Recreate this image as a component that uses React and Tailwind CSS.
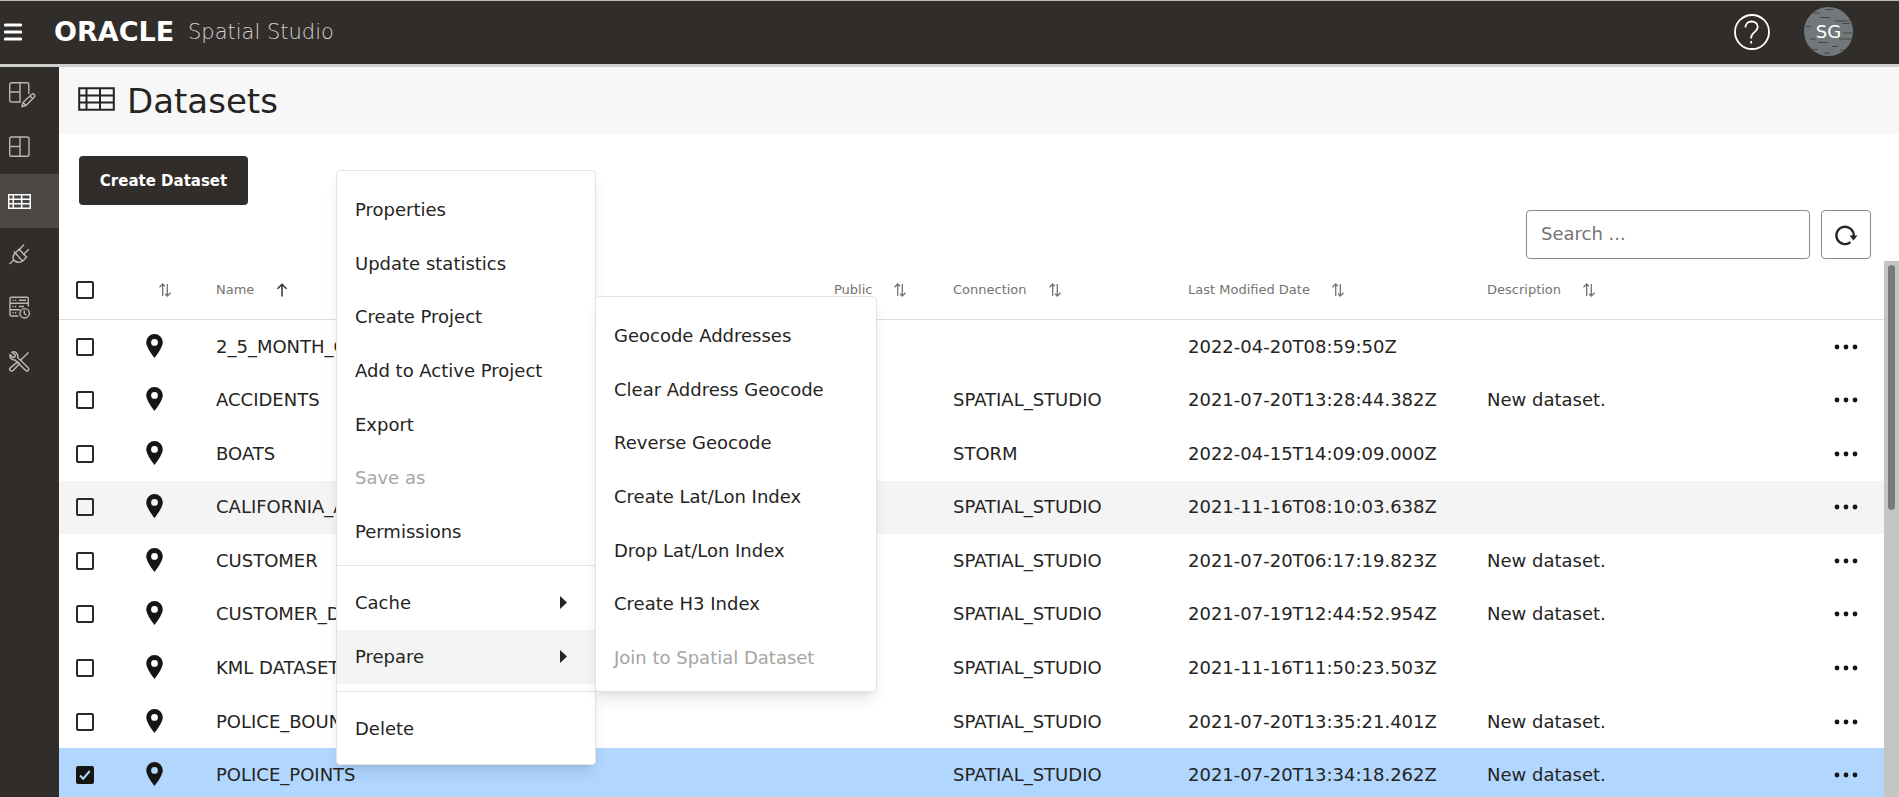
import { useState } from "react";
import clsx from "clsx";

const datasets = [
  { name: "2_5_MONTH_CRIMES", connection: "", modified: "2022-04-20T08:59:50Z", description: "" },
  { name: "ACCIDENTS", connection: "SPATIAL_STUDIO", modified: "2021-07-20T13:28:44.382Z", description: "New dataset." },
  { name: "BOATS", connection: "STORM", modified: "2022-04-15T14:09:09.000Z", description: "" },
  { name: "CALIFORNIA_AREAS", connection: "SPATIAL_STUDIO", modified: "2021-11-16T08:10:03.638Z", description: "", active: true },
  { name: "CUSTOMER", connection: "SPATIAL_STUDIO", modified: "2021-07-20T06:17:19.823Z", description: "New dataset." },
  { name: "CUSTOMER_DATA", connection: "SPATIAL_STUDIO", modified: "2021-07-19T12:44:52.954Z", description: "New dataset." },
  { name: "KML DATASET", connection: "SPATIAL_STUDIO", modified: "2021-11-16T11:50:23.503Z", description: "" },
  { name: "POLICE_BOUNDS", connection: "SPATIAL_STUDIO", modified: "2021-07-20T13:35:21.401Z", description: "New dataset." },
  { name: "POLICE_POINTS", connection: "SPATIAL_STUDIO", modified: "2021-07-20T13:34:18.262Z", description: "New dataset." },
];

const mainActions = [
  { label: "Properties" },
  { label: "Update statistics" },
  { label: "Create Project" },
  { label: "Add to Active Project" },
  { label: "Export" },
  { label: "Save as", disabled: true },
  { label: "Permissions" },
];

const prepareActions = [
  { label: "Geocode Addresses" },
  { label: "Clear Address Geocode" },
  { label: "Reverse Geocode" },
  { label: "Create Lat/Lon Index" },
  { label: "Drop Lat/Lon Index" },
  { label: "Create H3 Index" },
  { label: "Join to Spatial Dataset", disabled: true },
];

function GridIcon({ className, strokeWidth = 2 }) {
  return (
    <svg className={className} viewBox="0 0 37 24" fill="none" stroke="currentColor" strokeWidth={strokeWidth}>
      <path d="M1.200 1.200h34.600v21.600H1.200zM1 8.500h35M1 15.500h35M8.500 1v22M22 1v22" />
    </svg>
  );
}

function ProjectEditIcon() {
  return (
    <svg className="w-7 h-7" viewBox="0 0 28 28" fill="none" stroke="currentColor" strokeWidth="1.4">
      <path d="M13 22H3.500A1.800 1.800 0 0 1 1.700 20.200V4.500A1.800 1.800 0 0 1 3.500 2.700H19A1.800 1.800 0 0 1 20.800 4.500V14M12 3v18M2 12h10" />
      <path d="M14 26.500l1-4 8.500-8a1.900 1.900 0 0 1 2.700 2.700l-8.300 8.300zM15 22.500l3 3M22 16l2.500 2.500" />
    </svg>
  );
}

function ProjectIcon() {
  return (
    <svg className="w-7 h-7" viewBox="0 0 28 28" fill="none" stroke="currentColor" strokeWidth="1.4">
      <rect x="1.700" y="4" width="19.300" height="19.300" rx="1.800" />
      <path d="M12 4v19M2 13.500h10" />
    </svg>
  );
}

function PlugIcon() {
  return (
    <svg className="w-7 h-7" viewBox="0 0 28 28" fill="none" stroke="currentColor" strokeWidth="1.500">
      <path d="M1.500 23l4.500-4.200M6 10.500l8.500 9.500M7.500 11.800l3.500-3.500 7.500 7.800-3.200 3.300c-2.500 2.500-6.500 2.500-8.800.2s-1.800-5.200 1-7.800zM11.500 8.500l4.500-5M16 13l4.800-4.800" />
    </svg>
  );
}

function JobsIcon() {
  return (
    <svg className="w-7 h-7" viewBox="0 0 28 28" fill="none" stroke="currentColor" strokeWidth="1.400">
      <path d="M10.500 22H3.300a1.300 1.300 0 0 1-1.300-1.300V4.500a1.300 1.300 0 0 1 1.300-1.300H19a1.300 1.300 0 0 1 1.300 1.300v5.500M2 9.300h18.300v3.200M2 15.700h10" />
      <path d="M4.500 6.300h1.200M7 6.300h1.200M11 6.300h7M4.500 12.500h1.200M7 12.500h1.200M11 12.500h5M4.500 18.800h1.200M7 18.800h1.200" />
      <circle cx="16.700" cy="19.300" r="4.700" />
      <path d="M16.300 16.500v3l2.200 1.800" />
    </svg>
  );
}

function ToolsIcon() {
  return (
    <svg className="w-7 h-7" viewBox="0 0 28 28" fill="none" stroke="currentColor" strokeWidth="1.500" strokeLinejoin="round">
      <path d="M4 4.200l3.300 2.800-.5 2-2 .4L2 6.500c-.7 3 1.500 5.800 5 5.500l10.500 10.300a1.800 1.800 0 0 0 2.700-2.600L9.700 9.500C10.400 6 7.500 2.800 4 4.200z" />
      <path d="M20.500 4.500l-8 7.800M9.500 13.800l2 2-6.500 6.700a1.900 1.900 0 0 1-2.700-2.700z" />
    </svg>
  );
}

function PinIcon() {
  return (
    <svg className="w-[17px] h-6" viewBox="0 0 17 24">
      <path fillRule="evenodd" fill="currentColor" d="M8.500 0A8.300 8.300 0 0 0 .2 8.300C.2 14 8.500 24 8.500 24s8.300-10 8.300-15.700A8.300 8.300 0 0 0 8.500 0zm0 5a3.400 3.400 0 1 1 0 6.800 3.400 3.400 0 0 1 0-6.800z" />
    </svg>
  );
}

function SortIcon() {
  return (
    <svg className="w-4 h-4 shrink-0" viewBox="0 0 16 16" fill="none" stroke="currentColor" strokeWidth="1.300">
      <path d="M5.700 14V2M2.500 5.200L5.700 2l2.200 2.300M10.300 2v12M8 11.700l2.300 2.300 3.200-3.200" />
    </svg>
  );
}

function AscendingIcon() {
  return (
    <svg className="w-4 h-4 shrink-0 text-[#333]" viewBox="0 0 16 16" fill="none" stroke="currentColor" strokeWidth="1.500">
      <path d="M8 14.500V2.500M3.500 6.800L8 2.300l4.500 4.500" />
    </svg>
  );
}

function Checkbox({ label, ...props }) {
  return (
    <label className="grid w-[18px] h-[18px]" aria-label={label}>
      <input
        type="checkbox"
        aria-label={label}
        className="[grid-area:1/1] appearance-none w-[18px] h-[18px] border-2 border-[#2b2926] rounded-xs checked:bg-[#161513] checked:border-[#161513]"
        {...props}
      />
      <svg className="[grid-area:1/1] w-[18px] h-[18px] pointer-events-none" viewBox="0 0 18 18" fill="none" stroke="#b1d7ff" strokeWidth="2">
        {props.checked && <path d="M4 9.500l3.200 3.200L13.800 5" />}
      </svg>
    </label>
  );
}

function HeaderCell({ children, sorted }) {
  return (
    <th className="px-4 font-normal text-left" aria-sort={sorted ? "ascending" : undefined}>
      <button className="flex items-center gap-5">
        {children}
        {sorted ? <AscendingIcon /> : <SortIcon />}
      </button>
    </th>
  );
}

function MenuItem({ label, disabled, submenu, active }) {
  return (
    <li className="grid">
      <button
        disabled={disabled}
        className={clsx(
          "flex items-center justify-between pl-[18px] pr-7 text-left",
          disabled && "text-[#a6a5a4]",
          active && "bg-[#f4f4f4]"
        )}
      >
        {label}
        {submenu && (
          <svg className="w-[7px] h-[14px]" viewBox="0 0 7 14" fill="currentColor">
            <path d="M0 0l7 6.500-7 6.500z" />
          </svg>
        )}
      </button>
    </li>
  );
}

const navItems = [
  { label: "Active project", icon: <ProjectEditIcon /> },
  { label: "Projects", icon: <ProjectIcon /> },
  { label: "Datasets", icon: <GridIcon className="w-[23px] h-[15px]" strokeWidth={2.4} />, current: true },
  { label: "Connections", icon: <PlugIcon /> },
  { label: "Jobs", icon: <JobsIcon /> },
  { label: "Administration", icon: <ToolsIcon /> },
];

export default function App() {
  const [selected, setSelected] = useState(["POLICE_POINTS"]);

  const toggle = (name) =>
    setSelected((prev) => (prev.includes(name) ? prev.filter((n) => n !== name) : [...prev, name]));

  return (
    <div className="relative flex flex-col h-screen overflow-hidden bg-white text-lg text-[#252422] font-['DejaVu_Sans',sans-serif]">
      {/* Top bar */}
      <header className="flex items-center shrink-0 h-[67px] pl-1 pr-[46px] pb-[2px] border-t border-t-[#b5bab5] border-b-3 border-b-[#cdd0cd] bg-[#312d2a] text-white">
        <button aria-label="Toggle navigation" className="mr-8">
          <svg className="w-[18px] h-[18px]" viewBox="0 0 18 18" stroke="currentColor" strokeWidth="3.200" strokeLinecap="round">
            <path d="M1.500 2h15M1.500 9h15M1.500 16h15" />
          </svg>
        </button>
        <div className="flex items-center">
          <span className="w-[134px] text-[27px] leading-8 font-bold">ORACLE</span>
          <span className="text-[21px] leading-8 font-extralight text-[#d5d3d1]">Spatial Studio</span>
        </div>
        <button aria-label="Help" className="ml-auto mr-[34px]">
          <svg className="w-9 h-9" viewBox="0 0 36 36" fill="none" stroke="currentColor" strokeWidth="1.800">
            <circle cx="18" cy="18" r="17" />
            <path d="M11.500 13.500c0-3.800 2.500-6 6-6s6.200 2.200 6.200 5.500c0 5.200-6.500 5-6.500 10.500v1M17.200 27v2.500" />
          </svg>
        </button>
        <button aria-label="Account" className="grid place-items-center w-[49px] h-[49px] rounded-full overflow-hidden bg-[#71777a]">
          <svg className="[grid-area:1/1] w-full h-full" viewBox="0 0 49 49" stroke="#45484a" strokeWidth="1">
            <path d="M21 2.500h8M10 6h6M16 10.500h10M31 14h14M38 16.500h8M2 19.500h5M39 26h9M6 32h6M35 32h13M14 35.500h10M28 39.500h6M8 42.500h6M20 46h6M36 43h6" />
          </svg>
          <span className="[grid-area:1/1]">SG</span>
        </button>
      </header>

      <div className="flex flex-1 min-h-0">
        {/* Sidebar */}
        <nav className="w-[59px] shrink-0 bg-[#312d2a] text-[#bab6b1]">
          <ul className="grid auto-rows-fr h-[322px]">
            {navItems.map((item) => (
              <li key={item.label} className="grid">
                <a
                  href="#"
                  aria-label={item.label}
                  className={clsx("flex items-center pl-2", item.current && "bg-[#4c4845] text-white")}
                >
                  {item.icon}
                </a>
              </li>
            ))}
          </ul>
        </nav>

        <main className="flex flex-col flex-1 min-w-0">
          <div className="flex items-center gap-3 h-[67px] pl-[19px] shrink-0 bg-[#f7f7f7]">
            <GridIcon className="w-[37px] h-6 mb-1" />
            <h1 className="text-[34px] leading-10">Datasets</h1>
          </div>

          <div className="px-5 pt-[22px]">
            <button className="w-[169px] h-[49px] pt-[2px] rounded bg-[#312d2a] text-white text-[15px] font-bold">
              Create Dataset
            </button>
          </div>

          <div className="flex justify-end gap-[11px] pr-7 pt-[5px] pb-[2px] shrink-0">
            <input
              type="text"
              aria-label="Search"
              placeholder="Search ..."
              className="w-[284px] h-[49px] px-[14px] pb-[2px] border border-[#8b8a88] rounded placeholder:text-[#757371]"
            />
            <button aria-label="Refresh" className="grid place-items-center w-[50px] h-[49px] border border-[#8b8a88] rounded">
              <svg className="w-6 h-6" viewBox="0 0 24 24" fill="none" stroke="currentColor" strokeWidth="2.300">
                <path d="M16.500 19.200A8.700 8.700 0 1 1 19.700 13" />
                <path d="M15.500 12.500h8l-4 5z" fill="currentColor" stroke="none" />
              </svg>
            </button>
          </div>

          <div className="flex flex-1 min-h-0 overflow-hidden">
            <div className="flex-1 min-w-0">
              <table className="table-fixed w-full h-[541px] border-collapse">
                <colgroup>
                  <col className="w-[76px]" />
                  <col className="w-[65px]" />
                  <col />
                  <col className="w-[119px]" />
                  <col className="w-[235px]" />
                  <col className="w-[299px]" />
                  <col className="w-[337px]" />
                  <col className="w-[76px]" />
                </colgroup>
                <thead>
                  <tr className="h-[58px] border-b border-[#dfdedd] text-[13px] text-[#757371]">
                    <th className="pl-[17px]">
                      <Checkbox label="Select all" checked={false} readOnly />
                    </th>
                    <th className="pl-[22px]">
                      <button className="flex" aria-label="Sort by type">
                        <SortIcon />
                      </button>
                    </th>
                    <HeaderCell sorted>Name</HeaderCell>
                    <HeaderCell>Public</HeaderCell>
                    <HeaderCell>Connection</HeaderCell>
                    <HeaderCell>Last Modified Date</HeaderCell>
                    <HeaderCell>Description</HeaderCell>
                    <th></th>
                  </tr>
                </thead>
                <tbody>
                  {datasets.map((row) => (
                    <tr
                      key={row.name}
                      className={clsx(
                        row.active && "bg-[#f4f4f4]",
                        selected.includes(row.name) && "bg-[#b1d7ff]"
                      )}
                    >
                      <td className="pl-[17px]">
                        <Checkbox
                          label={`Select ${row.name}`}
                          checked={selected.includes(row.name)}
                          onChange={() => toggle(row.name)}
                        />
                      </td>
                      <td className="pl-[11px] pb-[2px] text-[#161513]">
                        <PinIcon />
                      </td>
                      <td className="px-4">{row.name}</td>
                      <td></td>
                      <td className="px-4">{row.connection}</td>
                      <td className="px-4">{row.modified}</td>
                      <td className="px-4">{row.description}</td>
                      <td>
                        <button aria-label={`Actions for ${row.name}`} className="flex mx-auto text-[#161513]">
                          <svg className="w-6 h-2" viewBox="0 0 24 8" fill="currentColor">
                            <circle cx="3" cy="4" r="2.400" />
                            <circle cx="12" cy="4" r="2.400" />
                            <circle cx="21" cy="4" r="2.400" />
                          </svg>
                        </button>
                      </td>
                    </tr>
                  ))}
                </tbody>
              </table>
            </div>

            {/* Scrollbar track */}
            <div className="w-[15px] shrink-0 px-1 pt-1 bg-[#c4c6c4]">
              <div className="h-[245px] rounded-full bg-[#787b7b]" />
            </div>
          </div>
        </main>
      </div>

      {/* Row context menu */}
      <div className="absolute left-[336px] top-[170px] w-[260px] pt-3 pb-2 bg-white border border-[#e4e3e2] rounded shadow-lg">
        <ul className="grid auto-rows-fr h-[376px]">
          {mainActions.map((item) => (
            <MenuItem key={item.label} {...item} />
          ))}
        </ul>
        <hr className="mt-[6px] mb-[10px] border-[#e4e3e2]" />
        <ul className="grid auto-rows-fr h-[108px]">
          <MenuItem label="Cache" submenu />
          <MenuItem label="Prepare" submenu active />
        </ul>
        <hr className="mt-[7px] mb-[10px] border-[#e4e3e2]" />
        <ul className="grid h-[54px]">
          <MenuItem label="Delete" />
        </ul>
      </div>

      {/* Prepare submenu */}
      <div className="absolute left-[595px] top-[296px] w-[282px] pt-3 pb-[6px] bg-white border border-[#e4e3e2] rounded shadow-lg">
        <ul className="grid auto-rows-fr h-[376px]">
          {prepareActions.map((item) => (
            <MenuItem key={item.label} {...item} />
          ))}
        </ul>
      </div>
    </div>
  );
}
